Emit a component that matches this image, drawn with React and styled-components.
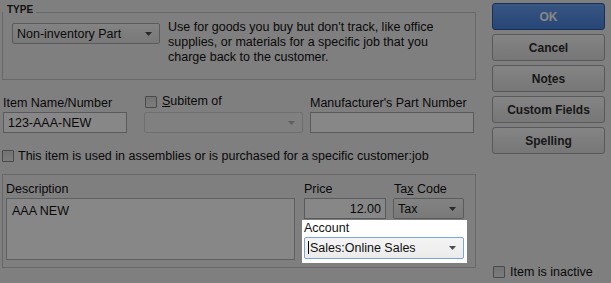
import React from 'react';
import styled, { createGlobalStyle } from 'styled-components';

const GlobalStyle = createGlobalStyle`
  html, body {
    margin: 0;
    padding: 0;
    overflow: hidden;
    background: #f0f0f0;
  }
  body {
    font-family: "Liberation Sans", Arial, sans-serif;
    font-size: 12.5px;
    color: #111;
  }
`;

const Dialog = styled.div`
  display: flex;
  width: 611px;
  height: 283px;
  box-sizing: border-box;
  background: #f0f0f0;
`;

const Main = styled.div`
  display: flex;
  flex-direction: column;
  width: 475px;
`;

const GroupBox = styled.div`
  position: relative;
  box-sizing: border-box;
  width: 474px;
  height: ${(p) => p.$height}px;
  margin: ${(p) => p.$top}px 0 0 2px;
  border: 1px solid #c4c4c4;
  display: flex;
  padding: ${(p) => p.$pad};
`;

const GroupTitle = styled.span`
  position: absolute;
  top: -9px;
  left: 0;
  padding: 0 3px 0 4px;
  background: #f0f0f0;
  font-size: 10px;
  line-height: 12px;
  font-weight: bold;
  color: #222;
`;

const Combo = styled.div`
  box-sizing: border-box;
  display: flex;
  align-items: center;
  justify-content: space-between;
  width: ${(p) => p.$width}px;
  height: ${(p) => p.$height || 21}px;
  padding: 0 7px 0 4px;
  border: 1px solid ${(p) => (p.$disabled ? '#d2d2d2' : '#acacac')};
  border-radius: 2px;
  background: ${(p) =>
    p.$disabled ? '#f2f2f2' : 'linear-gradient(#f7f7f7, #e4e4e4)'};
  color: #111;
  white-space: nowrap;
`;

const FocusCombo = styled(Combo)`
  border-color: #7ea4d6;
  background: linear-gradient(#f4f4f4, #ebebeb);
  padding-left: 3px;
`;

const Cursor = styled.span`
  display: inline-block;
  width: 1px;
  height: 13px;
  margin-right: 1px;
  background: #000;
  vertical-align: -2px;
`;

const Caret = ({ light }) => (
  <svg width="7" height="4" viewBox="0 0 7 4">
    <polygon points="0,0 7,0 3.5,4" fill={light ? '#b4b4b4' : '#4d4d4d'} />
  </svg>
);

const TypeText = styled.p`
  margin: -3px 0 0 8px;
  width: 300px;
  line-height: 15px;
  color: #111;
`;

const FieldsRow = styled.div`
  display: flex;
  align-items: flex-end;
  margin-top: 14px;
`;

const Field = styled.div`
  display: flex;
  flex-direction: column;
  width: ${(p) => p.$width}px;
  margin-left: ${(p) => p.$left || 0}px;
`;

const Label = styled.label`
  display: flex;
  align-items: center;
  gap: 5px;
  height: 15px;
  line-height: 15px;
  margin-bottom: ${(p) => p.$gap ?? 1}px;
  padding-left: ${(p) => p.$indent || 0}px;
  color: #111;
  white-space: nowrap;
`;

const TextInput = styled.input`
  box-sizing: border-box;
  width: 100%;
  height: 21px;
  margin: 0;
  padding: 0 4px;
  border: 1px solid #a9abb0;
  background: #fff;
  font: inherit;
  color: #111;
  text-align: ${(p) => p.$align || 'left'};
  outline: none;
`;

const TextArea = styled.textarea`
  box-sizing: border-box;
  width: 289px;
  height: 62px;
  margin: 0;
  padding: 5px 5px;
  border: 1px solid #b4b6ba;
  background: #fff;
  font: inherit;
  line-height: 15px;
  color: #111;
  resize: none;
  outline: none;
`;

const Check = styled.span`
  box-sizing: border-box;
  flex: none;
  width: 12px;
  height: 12px;
  margin-left: ${(p) => p.$left || 0}px;
  border: 1px solid #8c8c8c;
  border-radius: 1px;
  background: linear-gradient(#d8d8d8, #ececec);
`;

const CheckRow = styled.div`
  display: flex;
  align-items: center;
  gap: ${(p) => p.$gap || 4}px;
  height: 13px;
  margin-top: ${(p) => p.$top || 0}px;
  margin-left: ${(p) => p.$left || 0}px;
  color: #111;
  white-space: nowrap;
`;

const RightSide = styled.div`
  display: flex;
  flex-direction: column;
  margin-left: 9px;
`;

const PriceRow = styled.div`
  display: flex;
  gap: 7px;
`;

const Spotlight = styled.div`
  position: relative;
  z-index: 1;
  width: 165px;
  box-sizing: border-box;
  margin: 1px 0 0 -2px;
  padding: 1px 3px 4px 2px;
  background: #fff;
  box-shadow: 0 0 0 2000px rgba(0, 0, 0, 0.47);
`;

const Buttons = styled.div`
  display: flex;
  flex-direction: column;
  width: 113px;
  margin-left: 17px;
  padding-top: 3px;
  gap: 4px;
`;

const Button = styled.button`
  box-sizing: border-box;
  height: 27px;
  padding: 0;
  border: 1px solid ${(p) => (p.$primary ? '#2f5aa6' : '#a8a8a8')};
  border-radius: 3px;
  background: ${(p) =>
    p.$primary
      ? 'linear-gradient(#6aa2f4, #4a84e0)'
      : 'linear-gradient(#fafafa, #e0e0e0)'};
  color: ${(p) => (p.$primary ? '#ffffff' : '#2e2e2e')};
  font-family: "Liberation Sans", Arial, sans-serif;
  font-size: 12px;
  font-weight: bold;
`;

const Inactive = styled(CheckRow)`
  margin-top: auto;
  margin-bottom: 5px;
`;

export default function App() {
  return (
    <>
      <GlobalStyle />
      <Dialog>
        <Main>
          <GroupBox $top={12} $height={68} $pad="10px 0 0 9px">
            <GroupTitle>TYPE</GroupTitle>
            <Combo $width={148}>
              <span>Non-inventory Part</span>
              <Caret />
            </Combo>
            <TypeText>
              Use for goods you buy but don't track, like office supplies, or
              materials for a specific job that you charge back to the customer.
            </TypeText>
          </GroupBox>

          <FieldsRow>
            <Field $width={124} $left={3}>
              <Label>Item Name/Number</Label>
              <TextInput readOnly value="123-AAA-NEW" />
            </Field>
            <Field $width={159} $left={17}>
              <Label $gap={3}>
                <Check $left={1} />
                <span>
                  <u>S</u>ubitem of
                </span>
              </Label>
              <Combo $width={159} $disabled>
                <span />
                <Caret light />
              </Combo>
            </Field>
            <Field $width={164} $left={7}>
              <Label>Manufacturer's Part Number</Label>
              <TextInput readOnly value="" />
            </Field>
          </FieldsRow>

          <CheckRow $top={16} $left={2}>
            <Check />
            <span>
              This item is used in assemblies or is purchased for a specific
              customer:job
            </span>
          </CheckRow>

          <GroupBox $top={12} $height={94} $pad="7px 0 0 3px">
            <Field $width={289}>
              <Label>Description</Label>
              <TextArea readOnly value="AAA NEW" />
            </Field>
            <RightSide>
              <PriceRow>
                <Field $width={82}>
                  <Label>Price</Label>
                  <TextInput readOnly value="12.00" $align="right" />
                </Field>
                <Field $width={71}>
                  <Label $indent={1}>
                    <span>
                      Ta<u>x</u> Code
                    </span>
                  </Label>
                  <Combo $width={71}>
                    <span>Tax</span>
                    <Caret />
                  </Combo>
                </Field>
              </PriceRow>
              <Spotlight>
                <Label>Account</Label>
                <FocusCombo $width={160} $height={22}>
                  <span>
                    <Cursor />
                    Sales:Online Sales
                  </span>
                  <Caret />
                </FocusCombo>
              </Spotlight>
            </RightSide>
          </GroupBox>
        </Main>

        <Buttons>
          <Button $primary>OK</Button>
          <Button>Cancel</Button>
          <Button>
            No<u>t</u>es
          </Button>
          <Button>Custom Fields</Button>
          <Button>
            Spellin<u>g</u>
          </Button>
          <Inactive $gap={5}>
            <Check $left={1} />
            <span>Item is inactive</span>
          </Inactive>
        </Buttons>
      </Dialog>
    </>
  );
}
